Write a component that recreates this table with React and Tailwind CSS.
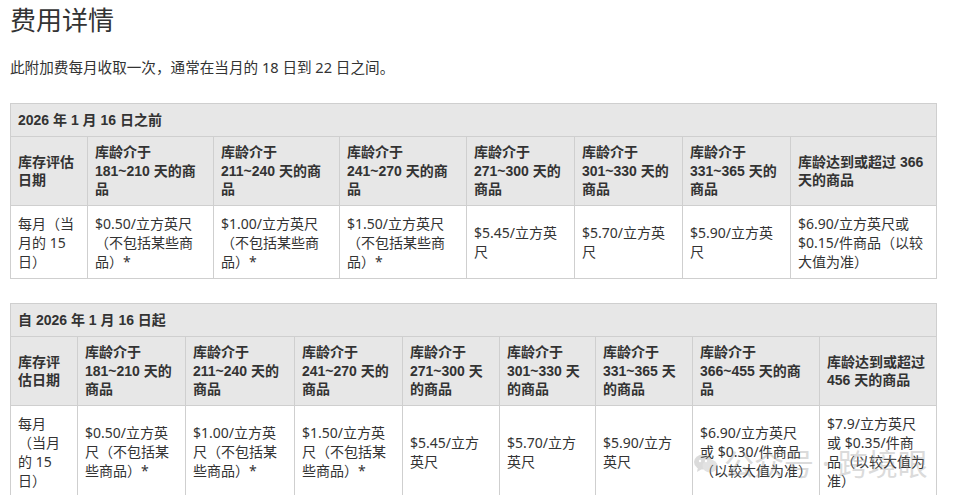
import React from "react";

const BODY = "font-['Noto_Sans','Noto_Sans_CJK_SC',sans-serif]";
const BOLD = "font-['Liberation_Sans','Noto_Sans_CJK_SC',sans-serif]";

function Table({ title, cols, heads, cells, rowH }) {
  return (
    <table className="w-[926px] table-fixed border-collapse text-[14px] text-[#333]">
      <colgroup>
        {cols.map((c, i) => (
          <col key={i} className={c} />
        ))}
      </colgroup>
      <thead>
        <tr className="h-[33px] bg-[#e7e7e7]">
          <th colSpan={cols.length} className={`border border-[#cfcfcf] px-[7px] text-left font-bold leading-[18px] ${BOLD}`}>
            {title}
          </th>
        </tr>
        <tr className="h-[69px] bg-[#e7e7e7]">
          {heads.map((h, i) => (
            <th key={i} className={`border border-[#cfcfcf] px-[7px] text-left align-middle font-bold leading-[18.5px] ${BOLD}`}>
              {h}
            </th>
          ))}
        </tr>
      </thead>
      <tbody>
        <tr className={`bg-white ${rowH}`}>
          {cells.map((c, i) => (
            <td key={i} className={`border border-[#cfcfcf] px-[7px] text-left align-middle leading-[19px] ${BODY}`}>
              {c}
            </td>
          ))}
        </tr>
      </tbody>
    </table>
  );
}

export default function App() {
  return (
    <div className={`relative h-[495px] w-[954px] overflow-hidden bg-white text-[#333] ${BODY}`}>
      <div className="px-[10px]">
        <h1 className="pt-[3px] text-[26px] font-normal leading-[34px] text-[#333]">费用详情</h1>
        <p className="mt-[20px] text-[14.6px] leading-[20px]">此附加费每月收取一次，通常在当月的 18 日到 22 日之间。</p>
        <div className="mt-[26px]">
          <Table
            title="2026 年 1 月 16 日之前"
            cols={["w-[77px]", "w-[126px]", "w-[126px]", "w-[127px]", "w-[108px]", "w-[108px]", "w-[108px]", "w-[146px]"]}
            rowH="h-[73px]"
            heads={[
              "库存评估日期",
              <>库龄介于<br />181~210 天的商品</>,
              <>库龄介于<br />211~240 天的商品</>,
              <>库龄介于<br />241~270 天的商品</>,
              <>库龄介于<br />271~300 天的商品</>,
              <>库龄介于<br />301~330 天的商品</>,
              <>库龄介于<br />331~365 天的商品</>,
              "库龄达到或超过 366 天的商品",
            ]}
            cells={[
              "每月（当月的 15 日）",
              "$0.50/立方英尺（不包括某些商品）*",
              "$1.00/立方英尺（不包括某些商品）*",
              "$1.50/立方英尺（不包括某些商品）*",
              "$5.45/立方英尺",
              "$5.70/立方英尺",
              "$5.90/立方英尺",
              "$6.90/立方英尺或 $0.15/件商品（以较大值为准）",
            ]}
          />
        </div>
        <div className="mt-[24px]">
          <Table
            title="自 2026 年 1 月 16 日起"
            cols={["w-[67px]", "w-[108px]", "w-[109px]", "w-[108px]", "w-[97px]", "w-[96px]", "w-[97px]", "w-[127px]", "w-[117px]"]}
            rowH="h-[92px]"
            heads={[
              "库存评估日期",
              <>库龄介于<br />181~210 天的商品</>,
              <>库龄介于<br />211~240 天的商品</>,
              <>库龄介于<br />241~270 天的商品</>,
              <>库龄介于<br />271~300 天的商品</>,
              <>库龄介于<br />301~330 天的商品</>,
              <>库龄介于<br />331~365 天的商品</>,
              <>库龄介于<br />366~455 天的商品</>,
              "库龄达到或超过 456 天的商品",
            ]}
            cells={[
              "每月（当月的 15 日）",
              "$0.50/立方英尺（不包括某些商品）*",
              "$1.00/立方英尺（不包括某些商品）*",
              "$1.50/立方英尺（不包括某些商品）*",
              "$5.45/立方英尺",
              "$5.70/立方英尺",
              "$5.90/立方英尺",
              <>$6.90/立方英尺<br />或 $0.30/件商品<br />（以较大值为准）</>,
              <>$7.9/立方英尺<br />或 $0.35/件商<br />品（以较大值为<br />准）</>,
            ]}
          />
        </div>
      </div>
      <div className="pointer-events-none absolute left-[694px] top-[446px] flex items-center gap-[6px] opacity-30">
        <svg width="24" height="22" viewBox="0 0 24 22">
          <ellipse cx="9" cy="9" rx="9" ry="7.5" fill="#8a8a8a" />
          <path d="M4 14 L3 19 L8 16 Z" fill="#8a8a8a" />
          <ellipse cx="16" cy="13" rx="7.5" ry="6.5" fill="#a0a0a0" />
          <circle cx="6" cy="8" r="1.2" fill="#fff" />
          <circle cx="12" cy="8" r="1.2" fill="#fff" />
        </svg>
        <span className="whitespace-nowrap text-[30px] leading-[36px] text-[#8a8a8a]">公众号 · 跨境眼</span>
      </div>
    </div>
  );
}
